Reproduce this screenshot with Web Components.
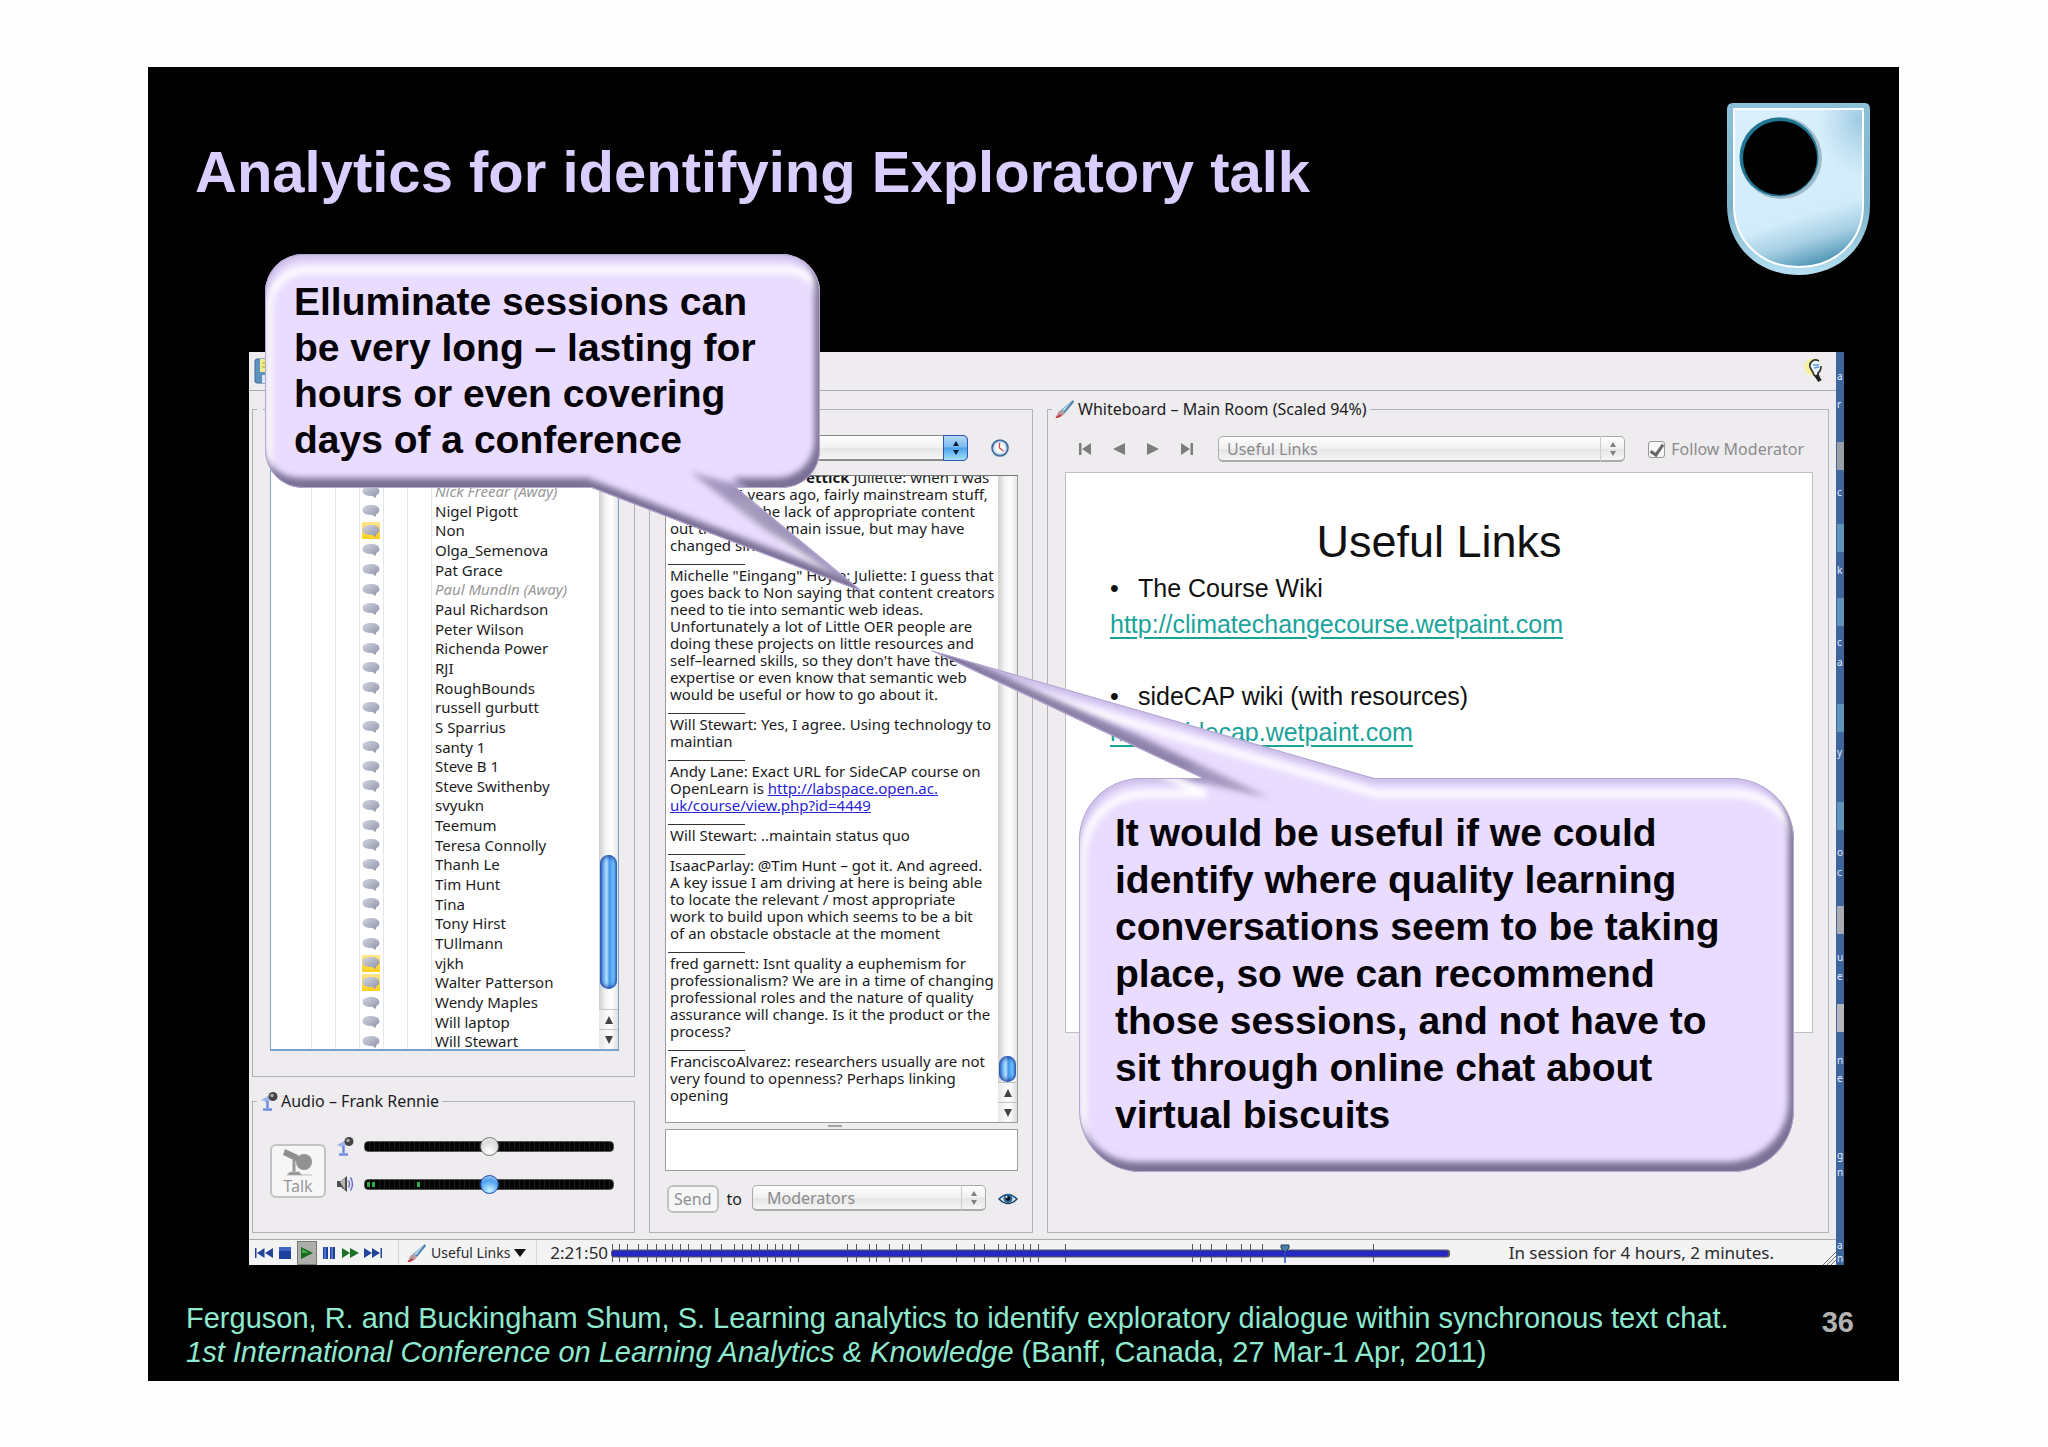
<!DOCTYPE html>
<html lang="en">
<head>
<meta charset="utf-8">
<title>Analytics for identifying Exploratory talk</title>
<style>
  body {
    margin: 0;
    min-height: 100vh;
    box-sizing: border-box;
    padding: 67px 149px 66px 148px;
    display: flex;
    background: #fefefe;
    font-family: "Liberation Sans", Arial, sans-serif;
  }
</style>
</head>
<body>
<talk-slide number="36">
  <span slot="title">Analytics for identifying Exploratory talk</span>
  <session-window></session-window>
  <speech-bubble class="first" slot="notes" shape="first">Elluminate sessions can<br>be very long – lasting for<br>hours or even covering<br>days of a conference</speech-bubble>
  <speech-bubble class="second" slot="notes" shape="second">It would be useful if we could<br>identify where quality learning<br>conversations seem to be taking<br>place, so we can recommend<br>those sessions, and not have to<br>sit through online chat about<br>virtual biscuits</speech-bubble>
  <span slot="cite">Ferguson, R. and Buckingham Shum, S. Learning analytics to identify exploratory dialogue within synchronous text chat.<br><i>1st International Conference on Learning Analytics &amp; Knowledge</i> (Banff, Canada, 27 Mar-1 Apr, 2011)</span>
</talk-slide>

<script>
/* global HTMLElement, customElements */

// attach an open shadow root filled from a markup string
function render (host, html) {
  const template = document.createElement('template')
  template.innerHTML = html
  host.attachShadow({ mode: 'open' }).appendChild(template.content.cloneNode(true))
}

const icons = {
  bubble: ['0 0 18 14', '<defs><linearGradient id="g" x1="0" y1="0" x2="1" y2="1"><stop offset="0" stop-color="#d3d6e2"/><stop offset="1" stop-color="#8d91a6"/></linearGradient></defs><path d="M9 1c5 0 8.500 2 8.500 5 0 1.800-1 3.200-3 4l-1 3-3.500-2.200C5 11.500.5 9.500.5 6S4 1 9 1z" fill="url(#g)"/>'],
  mic: ['0 0 18 19', '<path d="M1 8l9-5 3 4-7 3z" fill="#9fb4ea"/><path d="M7.500 9v7M3 17.500h9" stroke="#6d8ade" stroke-width="2.500"/><circle cx="13" cy="4.500" r="4.500" fill="#444"/><circle cx="12" cy="3.500" r="1.800" fill="#aaa"/>'],
  talk: ['0 0 30 28', '<path d="M2 1l13 6 2 8L0 7z" fill="#8e8e8e"/><circle cx="21" cy="14" r="8" fill="#929292"/><path d="M11 12v13" stroke="#999" stroke-width="3"/><path d="M4 27h15l-3-3H7zM19 27h10" fill="#8e8e8e" stroke="#bbb"/>'],
  speaker: ['0 0 18 18', '<path d="M1 6h4l6-5v16l-6-5H1z" fill="#4c4c4c"/><path d="M4 7l5-4v12z" fill="#b5b5b5"/><path d="M12.500 5.500q2 3.500 0 7M14.500 2.500q4 6.500 0 13" fill="none" stroke="#6c74c8" stroke-width="1.500"/>'],
  brush: ['0 0 20 18', '<path d="M18 0l1 2-9 11-4-3z" fill="#4d86b0"/><path d="M17 1L7 10l2 1z" fill="#c7e4f5"/><path d="M6 10l4 3c-2 4-6 4-9 5 1-3 1-6 5-8z" fill="#b99aa0"/><path d="M1 18l5-3" stroke="#c33" stroke-width="2"/>'],
  bulb: ['0 0 22 26', '<circle cx="10" cy="9" r="8.500" fill="#f7f19a"/><path d="M16 3C11 0 6 4 7 9c1 3 3 4 4 8l5 4-1-6c3-2 3-4 3-7" fill="#eef6fd" stroke="#333" stroke-width="1.700"/><path d="M10 7h6M11 10l5-1" stroke="#5a9bdc" stroke-width="1.500"/><path d="M13 17l4 6" stroke="#222" stroke-width="4"/>'],
  disk: ['0 0 26 26', '<rect x="1" y="1" width="24" height="24" rx="2" fill="#5d93c0" stroke="#3a6c99"/><path d="M6 1h16v13H6z" fill="#f4ec86"/><path d="M8 5h12M8 9h12" stroke="#a89a44"/><path d="M8 17h12v8H8z" fill="#dfe6ee"/>'],
  clock: ['0 0 18 18', '<circle cx="9" cy="9" r="7.800" fill="#fff" stroke="#3f6e9f" stroke-width="2"/><circle cx="9" cy="9" r="5.500" fill="none" stroke="#b9d2ea"/><path d="M8.500 4v5l4 3" fill="none" stroke="#d6453c" stroke-width="1.300"/>'],
  eye: ['0 0 20 14', '<path d="M1 7q9-9 18 0-9 9-18 0z" fill="#dcecf7" stroke="#1d4568" stroke-width="1.500"/><circle cx="10" cy="6.500" r="4.500" fill="#2b6a9c"/><circle cx="10" cy="6.500" r="2.400" fill="#08131e"/><circle cx="8.500" cy="5" r="1" fill="#fff"/>'],
  first: ['0 0 14 14', '<path d="M1 1h2.500v12H1zM13 1v12L4 7z" fill="#7d7d7d"/>'],
  prev: ['0 0 14 14', '<path d="M13 1v12L1 7z" fill="#7d7d7d"/>'],
  next: ['0 0 14 14', '<path d="M1 1v12l12-6z" fill="#7d7d7d"/>'],
  last: ['0 0 14 14', '<path d="M1 1v12l9-6zM10.500 1H13v12h-2.500z" fill="#7d7d7d"/>'],
  rewind: ['0 0 18 12', '<path d="M0 1h1.500v10H0zM9.500 1v10L2 6zM18 1v10l-8-5z" fill="#24449c"/>'],
  stop: ['0 0 14 12', '<path d="M1 0h12v12H1z" fill="#1d3f9e"/><path d="M1 0h12v4H1z" fill="#3f66c4"/>'],
  play: ['0 0 12 12', '<path d="M0 0v12l12-6z" fill="#176b1d"/><path d="M1 2v4h7z" fill="#4fa552"/>'],
  pause: ['0 0 14 12', '<path d="M1 0h5v12H1zM8 0h5v12H8z" fill="#1d3f9e"/><path d="M2 0h2v12H2zM9 0h2v12H9z" fill="#4f74cc"/>'],
  forward: ['0 0 18 12', '<path d="M1 1v10l8-5zM9 1v10l9-5z" fill="#1b7423"/>'],
  end: ['0 0 18 12', '<path d="M0 1v10l8-5zM8 1v10l8-5zM16.500 1H18v10h-1.500z" fill="#24449c"/>'],
  caret: ['0 0 12 8', '<path d="M0 0h12L6 8z" fill="#111"/>']
}

class UiIcon extends HTMLElement {
  constructor () {
    super()
    const [box, shape] = icons[this.getAttribute('name')]
    const [, , w, h] = box.split(' ')
    render(this, `
      <style>
        :host { display: inline-flex; flex: none; }
        svg { display: block; }
      </style>
      <svg viewBox="${box}" width="${w}" height="${h}" aria-hidden="true">${shape}</svg>
    `)
  }
}
customElements.define('ui-icon', UiIcon)

class OuLogo extends HTMLElement {
  constructor () {
    super()
    render(this, `
      <style>:host { display: block; flex: none; } svg { display: block; }</style>
      <svg width="144" height="173" viewBox="0 0 144 173" role="img" aria-label="The Open University">
        <defs>
          <linearGradient id="face" x1="0.350" y1="0" x2="0.600" y2="1">
            <stop offset="0" stop-color="#d9effb"/><stop offset=".68" stop-color="#d2ecfa"/>
            <stop offset=".84" stop-color="#a6cfe4"/><stop offset="1" stop-color="#4d94b4"/>
          </linearGradient>
          <linearGradient id="rim" x1="0" y1="0" x2="0" y2="1">
            <stop offset="0" stop-color="#8cc0d8"/><stop offset=".6" stop-color="#7db3cb"/><stop offset="1" stop-color="#b7e0f2"/>
          </linearGradient>
          <radialGradient id="shade" cx="1" cy="0.100" r=".6">
            <stop offset="0" stop-color="#8dbfda" stop-opacity=".8"/><stop offset="1" stop-color="#9fcbe4" stop-opacity="0"/>
          </radialGradient>
        </defs>
        <path d="M6 0h132q5 0 5 6v96c0 42-32 70-71.500 70S0 144 0 102V6q0-6 6-6z" fill="url(#rim)"/>
        <path d="M7 6h129v96c0 38-29 62-64.500 62S7 140 7 102z" fill="url(#face)" stroke="#fff" stroke-width="2"/>
        <path d="M60 7h75v95H60z" fill="url(#shade)"/>
        <circle cx="54" cy="55" r="41" fill="#9fbccb"/>
        <circle cx="52" cy="54" r="39.500" fill="#1f7592"/>
        <circle cx="53" cy="55" r="37" fill="#000"/>
      </svg>
    `)
  }
}
customElements.define('ou-logo', OuLogo)

class TalkSlide extends HTMLElement {
  constructor () {
    super()
    render(this, `
      <style>
        :host {
          position: relative;
          flex: 1;
          min-width: 0;
          display: flex;
          flex-direction: column;
          background: #000;
        }
        header {
          display: flex;
          justify-content: space-between;
          align-items: flex-start;
          min-height: 285px;
          box-sizing: border-box;
          padding: 36px 28px 0 47px;
        }
        h1 {
          margin: 36px 0 0;
          font-size: 58px;
          line-height: 66px;
          color: #dacdff;
        }
        main {
          flex: 1;
          display: flex;
          margin: 0 55px 0 101px;
        }
        footer {
          display: flex;
          justify-content: space-between;
          padding: 36px 45px 12px 38px;
          font-size: 29px;
          line-height: 34px;
          color: #8fe9cf;
        }
        b { margin-top: 4px; color: #b2b2b2; }
        ::slotted(.first), ::slotted(.second) { position: absolute; }
        ::slotted(.first) { left: 117px; top: 187px; }
        ::slotted(.second) { left: 931px; top: 711px; }
      </style>
      <header><h1><slot name="title"></slot></h1><ou-logo></ou-logo></header>
      <main><slot></slot></main>
      <footer><slot name="cite"></slot><b>${this.getAttribute('number')}</b></footer>
      <slot name="notes"></slot>
    `)
  }
}
customElements.define('talk-slide', TalkSlide)

// outline of each bubble with its tail, and the shaded fold where the two join
const bubbles = {
  first: {
    width: 555, height: 234, pad: '25px 29px', line: 46,
    path: 'M38 0H517A38 38 0 0 1 555 38V196A38 38 0 0 1 517 234H472L598 338L327 234H38A38 38 0 0 1 0 196V38A38 38 0 0 1 38 0Z',
    fold: 'M425 218L476 232L598 338L500 276Z'
  },
  second: {
    width: 715, height: 394, pad: '31px 36px', line: 47,
    path: 'M62 0H123L-149 -128L295 0H653A62 62 0 0 1 715 62V332A62 62 0 0 1 653 394H62A62 62 0 0 1 0 332V62A62 62 0 0 1 62 0Z',
    fold: 'M112 2L190 20L60 -43L-149 -128Z'
  }
}

class SpeechBubble extends HTMLElement {
  constructor () {
    super()
    const b = bubbles[this.getAttribute('shape')]
    render(this, `
      <style>
        :host {
          display: block;
          box-sizing: border-box;
          width: ${b.width}px;
          min-height: ${b.height}px;
          padding: ${b.pad};
          font-size: 39px;
          line-height: ${b.line}px;
          font-weight: bold;
          color: #050308;
          white-space: nowrap;
        }
        svg { position: absolute; left: 0; top: 0; overflow: visible; }
        div { position: relative; }
      </style>
      <svg width="${b.width}" height="${b.height}" aria-hidden="true">
        <defs>
          <clipPath id="edge"><path d="${b.path}"/></clipPath>
          <filter id="soft" x="-50%" y="-50%" width="200%" height="200%"><feGaussianBlur stdDeviation="3"/></filter>
        </defs>
        <g clip-path="url(#edge)">
          <path d="${b.path}" fill="#e9dcff"/>
          <path d="${b.path}" fill="none" stroke="#cabde6" stroke-width="10" filter="url(#soft)"/>
          <path d="${b.path}" fill="none" stroke="#fff" stroke-width="7" transform="translate(4 16)" filter="url(#soft)"/>
          <path d="M-400 -400H1400V900H-400Z${b.path}" fill="#7a6f94" fill-rule="evenodd" transform="translate(-5 -10)" filter="url(#soft)"/>
          <path d="${b.fold}" fill="#9084ac" fill-opacity=".8" filter="url(#soft)"/>
          <path d="${b.path}" fill="none" stroke="#b5a8d2" stroke-width="2"/>
        </g>
      </svg>
      <div><slot></slot></div>
    `)
  }
}
customElements.define('speech-bubble', SpeechBubble)

// titled frame
class GroupBox extends HTMLElement {
  constructor () {
    super()
    render(this, `
      <style>
        :host { display: flex; min-width: 0; min-height: 0; }
        fieldset {
          flex: 1;
          display: flex;
          flex-direction: column;
          min-width: 0;
          min-height: 0;
          margin: 0;
          border: 1px solid #b3b3b5;
          padding: 0 14px 0 15px;
          box-sizing: border-box;
        }
        legend {
          display: flex;
          align-items: center;
          gap: 3px;
          height: 20px;
          margin-left: -11px;
          padding: 0 3px;
          font-size: 16px;
          line-height: 20px;
          white-space: nowrap;
        }
      </style>
      <fieldset><legend><slot name="legend"></slot></legend><slot></slot></fieldset>
    `)
  }
}
customElements.define('group-box', GroupBox)

class AquaSelect extends HTMLElement {
  constructor () {
    super()
    const blue = this.hasAttribute('active')
    render(this, `
      <style>
        :host { display: grid; flex: 1; min-width: 0; height: 26px; }
        select, span { grid-area: 1 / 1; }
        select {
          appearance: none;
          width: 100%;
          height: 26px;
          margin: 0;
          padding: 0 8px;
          border: 1px solid ${blue ? '#8a8a8a' : '#aaa'};
          border-bottom-width: 2px;
          border-radius: 5px;
          background: linear-gradient(#fdfdfd, #f1f1f1 50%, #e4e4e4 52%, #f6f6f6);
          font: 16px "Noto Sans", sans-serif;
          line-height: 20px;
          color: #8b8b8d;
          opacity: 1;
        }
        :host([inset]) select { padding-left: 14px; }
        span {
          justify-self: end;
          width: 25px;
          height: 26px;
          display: grid;
          place-items: center;
          pointer-events: none;
          box-sizing: border-box;
          ${blue
            ? 'border: 1px solid #2f58b4; border-radius: 0 5px 5px 0; background: linear-gradient(#b4d8f8, #7cbcf2 45%, #4da2ea 50%, #a2e0fb);'
            : 'border-left: 1px solid #ccc;'}
        }
      </style>
      <select aria-label="${this.getAttribute('label')}" ${blue ? '' : 'disabled'}><option>${this.getAttribute('value') || ''}</option></select>
      <span><svg width="8" height="16" viewBox="0 0 8 16"><path d="M1 6h6L4 1zM1 10h6l-3 5z" fill="${blue ? '#0c1c38' : '#808080'}"/></svg></span>
    `)
  }
}
customElements.define('aqua-select', AquaSelect)

// vertical scroll bar, "after" is the free track below the thumb
class AquaScroll extends HTMLElement {
  constructor () {
    super()
    render(this, `
      <style>
        :host {
          display: flex;
          flex-direction: column;
          flex: none;
          width: 19px;
          background: linear-gradient(90deg, #cfcfcf, #f3f3f3 35%, #fff 65%, #e6e6e6);
        }
        i { flex: 1; }
        .thumb {
          height: ${this.getAttribute('thumb')}px;
          margin: 0 1px ${this.getAttribute('after')}px;
          border-radius: 9px;
          background: linear-gradient(90deg, #2b56b4, #6fb2f2 22%, #b5e0fd 40%, #4696ea 55%, #6cc0fa 80%, #2f63bb);
          box-shadow: inset 0 4px 4px -2px #2449a6, inset 0 -4px 4px -2px #2449a6;
        }
        .arrow {
          height: 20px;
          display: grid;
          place-items: center;
          border: 0;
          border-top: 1px solid #c4c4c4;
          padding: 0;
          background: linear-gradient(90deg, #e8e8e8, #fff 60%, #ddd);
        }
      </style>
      <i></i><div class="thumb"></div>
      <button class="arrow" aria-label="Up"><svg width="8" height="8"><path d="M0 8h8L4 0z" fill="#444"/></svg></button>
      <button class="arrow" aria-label="Down"><svg width="8" height="8"><path d="M0 0h8L4 8z" fill="#444"/></svg></button>
    `)
  }
}
customElements.define('aqua-scroll', AquaScroll)

const people = [
  ['Nick Freear (Away)', 'away'], ['Nigel Pigott'], ['Non', 'lit'], ['Olga_Semenova'], ['Pat Grace'],
  ['Paul Mundin (Away)', 'away'], ['Paul Richardson'], ['Peter Wilson'], ['Richenda Power'], ['RJI'],
  ['RoughBounds'], ['russell gurbutt'], ['S Sparrius'], ['santy 1'], ['Steve B 1'], ['Steve Swithenby'],
  ['svyukn'], ['Teemum'], ['Teresa Connolly'], ['Thanh Le'], ['Tim Hunt'], ['Tina'], ['Tony Hirst'],
  ['TUllmann'], ['vjkh', 'lit'], ['Walter Patterson', 'lit'], ['Wendy Maples'], ['Will laptop'], ['Will Stewart']
]

class PeopleList extends HTMLElement {
  constructor () {
    super()
    render(this, `
      <style>
        :host {
          flex: 1;
          min-height: 0;
          display: flex;
          overflow: hidden;
          border: 1px solid #7aa3cc;
          border-width: 1px 1px 2px;
          background: #fff;
        }
        ul {
          flex: 1;
          display: grid;
          grid-auto-rows: 1fr;
          margin: 0 0 -3px;
          padding: 46px 0 0;
          list-style: none;
          background: repeating-linear-gradient(90deg, #e3e6ea 0 1px, transparent 1px 24px) 40px 0 / 123px 100% no-repeat;
        }
        li {
          display: grid;
          grid-template-columns: 89px 22px 1fr;
          align-items: center;
          height: 19px;
          font-size: 15px;
          line-height: 19px;
          white-space: nowrap;
          color: #1c1c1e;
        }
        li span { grid-column: 3; padding-left: 53px; }
        .mark {
          grid-column: 2;
          justify-self: center;
          display: grid;
          place-items: center;
          height: 17px;
        }
        .lit .mark { background: linear-gradient(#ffe68a, #ffcf1c); }
        .away { color: #98989a; font-style: italic; }
      </style>
      <ul>${people.map(([name, cls]) => `<li class="${cls || ''}"><div class="mark"><ui-icon name="bubble"></ui-icon></div><span>${name}</span></li>`).join('')}</ul>
      <aqua-scroll thumb="134" after="20"></aqua-scroll>
    `)
  }
}
customElements.define('people-list', PeopleList)

class ChatLog extends HTMLElement {
  constructor () {
    super()
    render(this, `
      <style>
        :host {
          flex: 1 1 0;
          min-height: 0;
          display: flex;
          overflow: hidden;
          border: 1px solid #9b9b9d;
          border-top-color: #77777a;
          background: #fff;
        }
        .log {
          flex: 1;
          min-width: 0;
          height: 0;
          margin-top: -7px;
          padding-left: 4px;
          font-size: 15px;
          line-height: 17px;
          white-space: nowrap;
          color: #1a1a1c;
        }
        p { margin: 0; }
        p + p::before {
          content: "";
          display: block;
          width: 77px;
          height: 1px;
          margin: 10px 0 2px -2px;
          background: #333;
        }
        a { color: #2a24d8; }
        .a { padding-left: 136px; }
        .b { padding-left: 65px; }
        .c { padding-left: 87px; }
      </style>
      <div class="log">
        <p><span class="a"><b>ettick</b> Juliette: when I was</span><br><span class="b">5 years ago, fairly mainstream stuff,</span><br><span class="c">the lack of appropriate content</span><br>out there as the main issue, but may have<br>changed since</p>
        <p>Michelle "Eingang" Hoyle: Juliette: I guess that<br>goes back to Non saying that content creators<br>need to tie into semantic web ideas.<br>Unfortunately a lot of Little OER people are<br>doing these projects on little resources and<br>self–learned skills, so they don't have the<br>expertise or even know that semantic web<br>would be useful or how to go about it.</p>
        <p>Will Stewart: Yes, I agree. Using technology to<br>maintian</p>
        <p>Andy Lane: Exact URL for SideCAP course on<br>OpenLearn is <a href="#">http://labspace.open.ac.<br>uk/course/view.php?id=4449</a></p>
        <p>Will Stewart: ..maintain status quo</p>
        <p>IsaacParlay: @Tim Hunt – got it. And agreed.<br>A key issue I am driving at here is being able<br>to locate the relevant / most appropriate<br>work to build upon which seems to be a bit<br>of an obstacle obstacle at the moment</p>
        <p>fred garnett: Isnt quality a euphemism for<br>professionalism? We are in a time of changing<br>professional roles and the nature of quality<br>assurance will change. Is it the product or the<br>process?</p>
        <p>FranciscoAlvarez: researchers usually are not<br>very found to openness? Perhaps linking<br>opening</p>
      </div>
      <aqua-scroll thumb="26" after="0"></aqua-scroll>
    `)
  }
}
customElements.define('chat-log', ChatLog)

class AudioPanel extends HTMLElement {
  constructor () {
    super()
    render(this, `
      <style>
        :host {
          display: grid;
          grid-template-columns: 56px 18px 1fr;
          grid-template-rows: 38px 38px;
          column-gap: 10px;
          align-items: center;
          justify-items: center;
          padding: 16px 6px 29px 2px;
        }
        button {
          grid-row: 1 / 3;
          justify-self: stretch;
          height: 54px;
          margin-top: 12px;
          display: flex;
          flex-direction: column;
          align-items: center;
          justify-content: flex-end;
          padding: 0;
          border: 2px solid #c3c3c5;
          border-radius: 6px;
          background: #f6f6f7;
          font: 16px/20px "Noto Sans", sans-serif;
          color: #98989a;
        }
        input {
          appearance: none;
          width: 100%;
          height: 19px;
          margin: 0;
          background: none;
        }
        input::-webkit-slider-runnable-track {
          height: 11px;
          border-radius: 4px;
          border: 1px solid #555;
          box-sizing: border-box;
          background: repeating-linear-gradient(90deg, #050505 0 4px, #1c1c1c 4px 5px);
        }
        .out::-webkit-slider-runnable-track {
          background:
            linear-gradient(#2fae4c, #2fae4c) 2px 2px / 3px 5px no-repeat,
            linear-gradient(#2fae4c, #2fae4c) 7px 2px / 3px 5px no-repeat,
            linear-gradient(#2fae4c, #2fae4c) 52px 2px / 3px 5px no-repeat,
            repeating-linear-gradient(90deg, #050505 0 4px, #1c1c1c 4px 5px);
        }
        input::-webkit-slider-thumb {
          appearance: none;
          width: 19px;
          height: 19px;
          margin-top: -5px;
          border-radius: 50%;
          border: 1px solid #777;
          background: radial-gradient(circle at 50% 80%, #fff, #dcdcdc 60%, #eee);
        }
        .out::-webkit-slider-thumb {
          border-color: #1f49ac;
          background: radial-gradient(circle at 50% 85%, #c8f4ff, #4d9fee 60%, #b7d8fb);
        }
      </style>
      <button disabled><ui-icon name="talk"></ui-icon>Talk</button>
      <ui-icon name="mic"></ui-icon><input type="range" value="50" aria-label="Microphone level">
      <ui-icon name="speaker"></ui-icon><input class="out" type="range" value="50" aria-label="Speaker level">
    `)
  }
}
customElements.define('audio-panel', AudioPanel)

class WhiteBoard extends HTMLElement {
  constructor () {
    super()
    render(this, `
      <style>
        :host { display: block; padding: 17px 1px 0 2px; font-size: 16px; color: #8b8b8d; }
        .bar { display: flex; align-items: center; padding: 0 9px 0 13px; }
        nav { display: flex; gap: 20px; margin-right: 24px; }
        nav button { display: flex; padding: 0; border: 0; background: none; }
        input {
          appearance: none;
          width: 17px;
          height: 17px;
          margin: 0 6px 0 23px;
          border: 1px solid #999;
          border-radius: 3px;
          background: #f8f8f8;
          display: grid;
          place-items: center;
        }
        input:checked::before {
          content: "";
          width: 5px;
          height: 11px;
          margin-bottom: 4px;
          border: solid #666;
          border-width: 0 3px 3px 0;
          transform: rotate(35deg);
        }
        label { line-height: 22px; white-space: nowrap; }
        article {
          aspect-ratio: 4 / 3;
          box-sizing: border-box;
          margin-top: 10px;
          padding: 43px 44px 0;
          border: 1px solid #c0c0c2;
          background: #fff;
          font-family: "Liberation Sans", Arial, sans-serif;
          color: #111;
        }
        h2 { margin: 0 0 2px; font-size: 45px; line-height: 52px; font-weight: normal; text-align: center; }
        ul { margin: 0 0 36px; padding: 0; list-style: none; font-size: 25px; line-height: 36px; }
        li:first-child { display: grid; grid-template-columns: 28px 1fr; }
        a { color: #1aa39a; text-underline-offset: 4px; }
      </style>
      <div class="bar">
        <nav>
          <button aria-label="First"><ui-icon name="first"></ui-icon></button>
          <button aria-label="Previous"><ui-icon name="prev"></ui-icon></button>
          <button aria-label="Next"><ui-icon name="next"></ui-icon></button>
          <button aria-label="Last"><ui-icon name="last"></ui-icon></button>
        </nav>
        <aqua-select label="Page" value="Useful Links"></aqua-select>
        <input type="checkbox" id="follow" checked disabled><label for="follow">Follow Moderator</label>
      </div>
      <article>
        <h2>Useful Links</h2>
        <ul><li><span>•</span><span>The Course Wiki</span></li><li><a href="#">http://climatechangecourse.wetpaint.com</a></li></ul>
        <ul><li><span>•</span><span>sideCAP wiki (with resources)</span></li><li><a href="#">http://sidecap.wetpaint.com</a></li></ul>
      </article>
    `)
  }
}
customElements.define('white-board', WhiteBoard)

// bookmarks along the recording, measured from its start
const ticks = [2, 9, 17, 28, 37, 46, 55, 62, 70, 78, 91, 100, 111, 124, 132, 141, 149, 157, 165, 172, 180, 188,
  237, 246, 259, 266, 279, 292, 299, 311, 346, 364, 374, 388, 396, 405, 413, 420, 428, 455,
  582, 590, 601, 616, 631, 640, 652, 763]

class StatusBar extends HTMLElement {
  constructor () {
    super()
    render(this, `
      <style>
        :host {
          display: flex;
          align-items: center;
          height: 25px;
          border-top: 1px solid #aaa;
          background: #f4f3f4;
          font-size: 14px;
          color: #2b2b2d;
          white-space: nowrap;
        }
        .keys { display: flex; align-items: center; padding: 0 16px 0 6px; gap: 5px; }
        .keys button { display: flex; padding: 0; border: 0; background: none; }
        .keys .on { padding: 5px 3px; border: 1px solid #777; background: #adafab; }
        .pick {
          display: flex;
          align-items: center;
          gap: 4px;
          height: 25px;
          border: solid #d5d5d7;
          border-width: 0 1px;
          padding: 0 10px 0 8px;
          background: none;
          font: inherit;
          color: inherit;
        }
        time { padding: 0 2px 0 13px; font-size: 17px; }
        .line { display: block; flex: none; }
        .left { margin-left: auto; padding-right: 48px; font-size: 17px; }
        .grip { align-self: flex-end; flex: none; }
      </style>
      <div class="keys">
        <button aria-label="Start"><ui-icon name="rewind"></ui-icon></button>
        <button aria-label="Stop"><ui-icon name="stop"></ui-icon></button>
        <button class="on" aria-label="Play"><ui-icon name="play"></ui-icon></button>
        <button aria-label="Pause"><ui-icon name="pause"></ui-icon></button>
        <button aria-label="Fast forward"><ui-icon name="forward"></ui-icon></button>
        <button aria-label="End"><ui-icon name="end"></ui-icon></button>
      </div>
      <button class="pick"><ui-icon name="brush"></ui-icon>Useful Links<ui-icon name="caret"></ui-icon></button>
      <time>2:21:50</time>
      <svg class="line" width="844" height="24" viewBox="0 0 844 24" aria-hidden="true">
        <path d="${ticks.map(x => `M${x}.500 3v18`).join('')}" stroke="#555"/>
        <rect x="1" y="8.500" width="839" height="8" rx="3" fill="#5a5a60"/>
        <rect x="2" y="9.500" width="836" height="6" rx="2" fill="#2727c4"/>
        <path d="M675 8v14" stroke="#2a55b8" stroke-width="1.500"/>
        <path d="M671 4h8v3l-4 4-4-4z" fill="#4d7fa6" stroke="#1b3f63"/>
      </svg>
      <span class="left">In session for 4 hours, 2 minutes.</span>
      <svg class="grip" width="14" height="14"><path d="M1 14L14 1M5 14l9-9M9 14l5-5" stroke="#777"/></svg>
    `)
  }
}
customElements.define('status-bar', StatusBar)

// sliver of desktop showing past the window's right edge
const slivers = [[24, 'a'], [52, 'r'], [140, 'c'], [218, 'k'], [290, 'c'], [310, 'a'], [400, 'y'], [500, 'o'], [520, 'c'],
  [605, 'u'], [624, 'e'], [708, 'n'], [726, 'e'], [803, 'g'], [820, 'n'], [893, 'a'], [906, 'n']]
const thumbs = [[90, '#9a9ea6'], [172, '#5f93b8'], [246, '#5f93b8'], [352, '#5f93b8'], [450, '#5f93b8'], [554, '#a9abb0'], [652, '#b4b6ba']]

class SessionWindow extends HTMLElement {
  constructor () {
    super()
    render(this, `
      <style>
        :host {
          flex: 1;
          min-width: 0;
          display: flex;
          font-family: "Noto Sans", sans-serif;
          color: #1c1c1e;
        }
        .window {
          flex: 1;
          min-width: 0;
          display: flex;
          flex-direction: column;
          background: #eeecee;
        }
        .tools {
          display: flex;
          justify-content: space-between;
          align-items: center;
          height: 38px;
          padding: 0 11px 0 5px;
          border-bottom: 1px solid #a9a9ab;
        }
        .panes {
          flex: 1;
          display: grid;
          grid-template-columns: 383px 384px 1fr;
          column-gap: 14px;
          padding: 8px 7px 6px 3px;
        }
        .side { display: flex; flex-direction: column; gap: 14px; min-height: 0; }
        .side group-box:first-child { flex: 1; }
        people-list { margin: 16px 1px 25px 2px; }
        .row { display: flex; align-items: center; }
        .to { padding: 16px 9px 14px 0; gap: 23px; }
        .split { width: 14px; height: 2px; margin: 2px 0 2px 163px; background: #a5a5a7; }
        textarea {
          height: 42px;
          box-sizing: border-box;
          margin: 0;
          border: 1px solid #9b9b9d;
          resize: none;
          background: #fff;
        }
        .send { padding: 14px 0 19px 2px; gap: 8px; font-size: 16px; line-height: 24px; }
        .send button {
          height: 28px;
          padding: 0 5px;
          border: 2px solid #c0c0c2;
          border-radius: 6px;
          background: #f6f6f7;
          font: 16px "Noto Sans", sans-serif;
          color: #8e8e90;
        }
        .send aqua-select { margin: 0 4px 2px 2px; }
        .desk { flex: none; width: 8px; background: #3f659f; overflow: hidden; }
        .desk svg { display: block; }
      </style>
      <div class="window">
        <div class="tools"><ui-icon name="disk"></ui-icon><ui-icon name="bulb"></ui-icon></div>
        <div class="panes">
          <div class="side">
            <group-box><people-list></people-list></group-box>
            <group-box>
              <ui-icon slot="legend" name="mic"></ui-icon><span slot="legend">Audio – Frank Rennie</span>
              <audio-panel></audio-panel>
            </group-box>
          </div>
          <group-box>
            <div class="row to"><aqua-select active label="Show messages"></aqua-select><ui-icon name="clock"></ui-icon></div>
            <chat-log></chat-log>
            <div class="split"></div>
            <textarea aria-label="Message"></textarea>
            <div class="row send"><button disabled>Send</button><span>to</span><aqua-select inset label="Send to" value="Moderators"></aqua-select><ui-icon name="eye"></ui-icon></div>
          </group-box>
          <group-box>
            <ui-icon slot="legend" name="brush"></ui-icon><span slot="legend">Whiteboard – Main Room (Scaled 94%)</span>
            <white-board></white-board>
          </group-box>
        </div>
        <status-bar></status-bar>
      </div>
      <div class="desk"><svg width="8" height="913" aria-hidden="true">
        ${thumbs.map(([y, c]) => `<rect x="1" y="${y}" width="7" height="28" fill="${c}"/>`).join('')}
        ${slivers.map(([y, t]) => `<text x="1" y="${y + 4}" font-size="10" fill="#e8eef6">${t}</text>`).join('')}
      </svg></div>
    `)
  }
}
customElements.define('session-window', SessionWindow)
</script>
</body>
</html>
